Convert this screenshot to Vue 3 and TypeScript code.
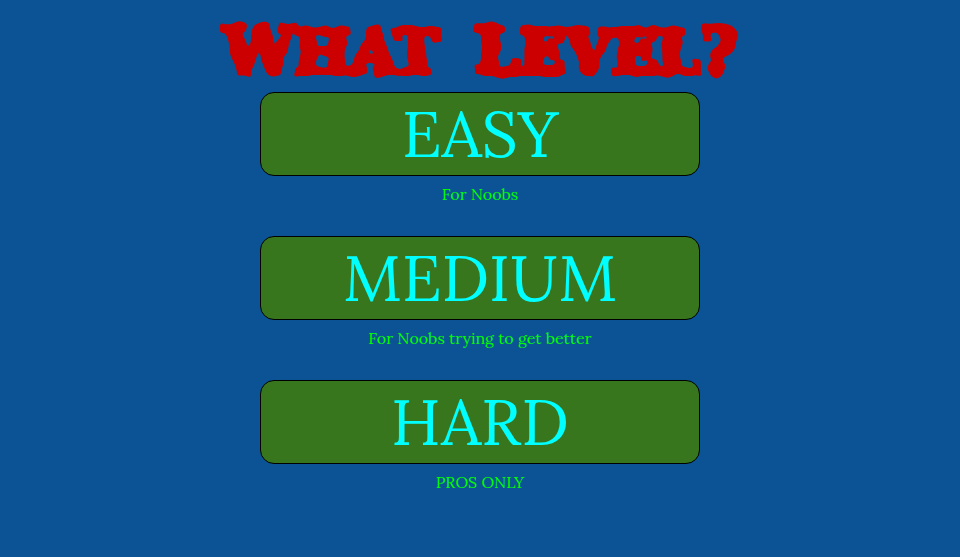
<script setup lang="ts">
interface Level {
  id: string
  name: string
  note: string
}

const levels: Level[] = [
  { id: 'easy', name: 'EASY', note: 'For Noobs' },
  { id: 'medium', name: 'MEDIUM', note: 'For Noobs trying to get better' },
  { id: 'hard', name: 'HARD', note: 'PROS ONLY' },
]
</script>

<template>
  <main class="screen">
    <svg class="defs" width="0" height="0" aria-hidden="true">
      <filter id="ragged" x="-5%" y="-10%" width="110%" height="120%">
        <feTurbulence type="fractalNoise" baseFrequency="0.08" numOctaves="1" seed="12" result="noise" />
        <feDisplacementMap in="SourceGraphic" in2="noise" scale="9" xChannelSelector="R" yChannelSelector="G" result="torn" />
        <feGaussianBlur in="torn" stdDeviation="1.5" result="soft" />
        <feComponentTransfer in="soft">
          <feFuncA type="linear" slope="4" intercept="-1.5" />
        </feComponentTransfer>
      </filter>
    </svg>
    <h1 class="title">
      <span><span class="cap">W</span>HAT</span>
      <span><span class="cap">L</span>EVEL<span class="cap">?</span></span>
    </h1>
    <ul class="levels">
      <li v-for="level in levels" :key="level.id" class="level">
        <button type="button" class="choice" :aria-describedby="level.id">{{ level.name }}</button>
        <p :id="level.id" class="note">{{ level.note }}</p>
      </li>
    </ul>
  </main>
</template>

<style>
body {
  background: #0b5394;
}
</style>

<style scoped>
.screen {
  display: flex;
  flex-direction: column;
  align-items: center;
  min-height: 100vh;
  box-sizing: border-box;
  padding: 12px 16px 16px;
  background: #0b5394;
  font-family: Lora, "Liberation Serif", serif;
}

.defs {
  position: absolute;
}

.title {
  display: flex;
  gap: 36px;
  margin: 0;
  color: #cc0000;
  font: bold 60px/80px "DejaVu Serif", serif;
  white-space: nowrap;
  -webkit-text-stroke: 6px #cc0000;
  filter: url(#ragged);
  color-interpolation-filters: sRGB;
}

.cap {
  font-size: 64px;
  line-height: 64px;
}

.levels {
  display: grid;
  gap: 24px;
  width: 100%;
  max-width: 440px;
  margin: 0;
  padding: 0;
  list-style: none;
}

.choice {
  display: block;
  width: 100%;
  height: 84px;
  padding: 0;
  border: 1px solid #000;
  border-radius: 14px;
  background: #38761d;
  color: #00ffff;
  font: inherit;
  font-size: 64px;
  line-height: 80px;
  cursor: pointer;
}

.note {
  margin: 0;
  color: #00ff00;
  font-size: 16px;
  line-height: 36px;
  text-align: center;
}
</style>
